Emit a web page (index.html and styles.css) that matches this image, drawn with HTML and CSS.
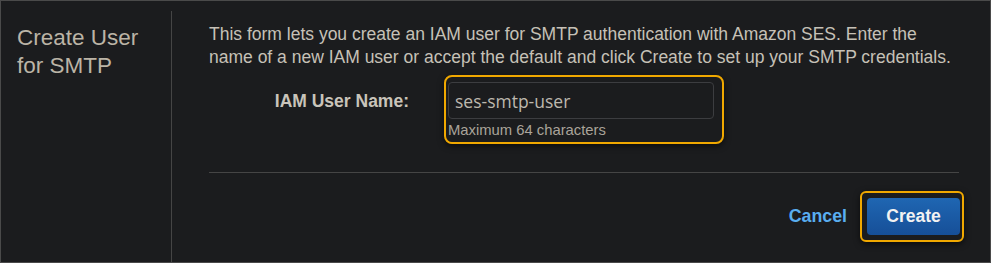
FILE: index.html
```html
<!DOCTYPE html>
<html lang="en">
<head>
    <meta charset="UTF-8">
    <title>Create User for SMTP</title>
    <link rel="stylesheet" href="styles.css">
</head>
<body>
    <div class="panel">
        <div class="side">
            <h2>Create User for SMTP</h2>
        </div>

        <div class="main">
            <p class="intro">
                This form lets you create an IAM user for SMTP authentication with Amazon SES. Enter the
                name of a new IAM user or accept the default and click Create to set up your SMTP credentials.
            </p>

            <div class="form-row">
                <label for="username">IAM User Name:</label>
                <div class="field-focus">
                    <input type="text" id="username" value="ses-smtp-user">
                    <div class="hint">Maximum 64 characters</div>
                </div>
            </div>

            <hr>

            <div class="actions">
                <a href="#" class="cancel">Cancel</a>
                <span class="btn-focus">
                    <button>Create</button>
                </span>
            </div>
        </div>
    </div>
</body>
</html>
```

FILE: styles.css
```css
* {
    box-sizing: border-box;
    font-family: 'Liberation Sans', Arial, sans-serif;
}

body {
    margin: 0;
    background: #1b1c1e;
}

.panel {
    display: flex;
    width: 991px;
    height: 263px;
    border: 1px solid #4a4a4a;
    background: #1b1c1e;
}

.side {
    width: 171px;
    margin-top: 10px;
    padding: 13px 16px;
    border-right: 1px solid #454545;
}

h2 {
    margin: 0;
    font-size: 22.5px;
    font-weight: normal;
    line-height: 28px;
    color: #bbb4a6;
}

.main {
    flex: 1;
    padding: 22px 31px 0 37px;
}

.intro {
    margin: 0;
    font-size: 17.5px;
    line-height: 23px;
    color: #c6c1b7;
}

.form-row {
    display: flex;
    align-items: flex-start;
    margin-top: 6px;
}

label {
    width: 200px;
    padding-top: 16px;
    text-align: right;
    font-size: 17.5px;
    line-height: 20px;
    font-weight: bold;
    color: #c9c4ba;
}

.field-focus {
    margin-left: 35px;
    width: 280px;
    padding: 5px 8px 3px 2px;
    border: 2px solid #f0a800;
    border-radius: 8px;
    box-shadow: 0 2px 6px rgba(0,0,0,0.6);
}

input {
    display: block;
    width: 266px;
    height: 37px;
    padding: 0 6px;
    background: #1b1c1e;
    border: 1px solid #3c3d40;
    border-radius: 4px;
    font-family: 'Open Sans', sans-serif;
    font-size: 17.5px;
    color: #bdb8ae;
    outline: none;
}

.hint {
    margin-top: 3px;
    font-size: 14.8px;
    line-height: 17px;
    color: #aaa49a;
}

hr {
    margin: 28px 0 0;
    border: none;
    border-top: 1px solid #454545;
}

.actions {
    display: flex;
    justify-content: flex-end;
    align-items: center;
    margin: 18px -5px 0 0;
}

.cancel {
    margin-right: 13px;
    font-size: 17.8px;
    font-weight: bold;
    color: #59aef0;
    text-decoration: none;
}

.btn-focus {
    display: inline-block;
    padding: 5px 2px 5px 5px;
    border: 2px solid #f0a800;
    border-radius: 6px;
    box-shadow: 0 2px 6px rgba(0,0,0,0.6);
}

button {
    display: block;
    width: 93px;
    height: 37px;
    background: linear-gradient(#1f66b2, #164f98);
    border: none;
    border-radius: 4px;
    font-size: 17.5px;
    font-weight: bold;
    color: #f2f2f2;
    cursor: pointer;
}
```
